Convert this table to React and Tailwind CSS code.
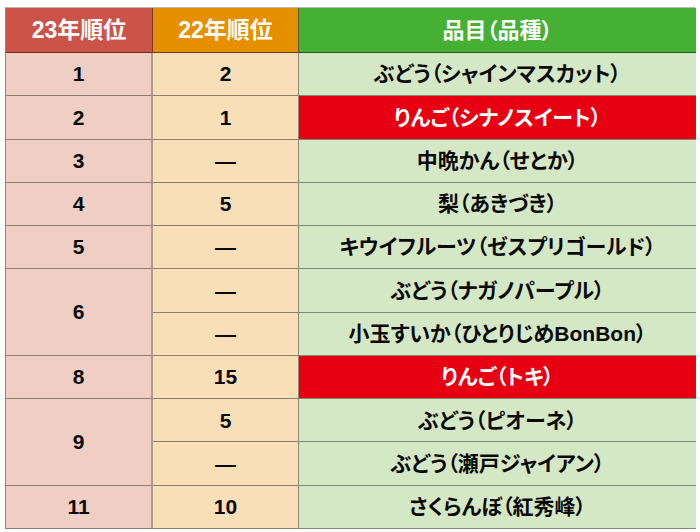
import React from "react";

const rows = [
  { a: "1", b: ["2"], c: [["ぶどう（シャインマスカット）", false]] },
  { a: "2", b: ["1"], c: [["りんご（シナノスイート）", true]] },
  { a: "3", b: ["—"], c: [["中晩かん（せとか）", false]] },
  { a: "4", b: ["5"], c: [["梨（あきづき）", false]] },
  { a: "5", b: ["—"], c: [["キウイフルーツ（ゼスプリゴールド）", false]] },
  { a: "6", b: ["—", "—"], c: [["ぶどう（ナガノパープル）", false], ["小玉すいか（ひとりじめBonBon）", false]] },
  { a: "8", b: ["15"], c: [["りんご（トキ）", true]] },
  { a: "9", b: ["5", "—"], c: [["ぶどう（ピオーネ）", false], ["ぶどう（瀬戸ジャイアン）", false]] },
  { a: "11", b: ["10"], c: [["さくらんぼ（紅秀峰）", false]] },
];

const font = { fontFamily: '"Liberation Sans", "Noto Sans CJK JP", sans-serif' };

export default function App() {
  const cells = [];
  rows.forEach((r, i) => {
    const span = r.b.length;
    cells.push(
      <div
        key={`a${i}`}
        className={`flex items-center justify-center bg-[#efcfc3] border-r-2 border-r-[#ae9b8f] border-b border-b-[#8d7b72] ${span === 2 ? "row-span-2" : ""}`}
      >
        {r.a}
      </div>
    );
    for (let k = 0; k < span; k++) {
      cells.push(
        <div
          key={`b${i}-${k}`}
          className="flex items-center justify-center bg-[#f8dfb8] border-r border-r-[#8f8a76] border-b border-b-[#8d7f6c]"
        >
          {r.b[k]}
        </div>
      );
      const [txt, red] = r.c[k];
      cells.push(
        <div
          key={`c${i}-${k}`}
          className={`flex items-center justify-center border-b border-b-[#7e8a78] [font-feature-settings:'palt'] ${red ? "bg-[#e60012] text-white" : "bg-[#d5e8c5]"}`}
        >
          {txt}
        </div>
      );
    }
  });

  return (
    <div className="w-[700px] h-[532px] bg-white pt-[7px] pl-[5px]" style={font}>
      <div className="w-[690px] grid grid-cols-[147px_146px_397px] grid-rows-[45px_repeat(11,43.27px)] border-t border-t-[#b8b8b8] border-l border-l-[#8a8a8a] border-r border-r-[#8a8a8a] font-bold text-[21px] text-[#0a0a0a]">
        <div className="flex items-center justify-center bg-[#cc5348] text-white text-[23px] border-r border-r-[#7a3a2a] border-b border-b-[#6a2a20]">
          23年順位
        </div>
        <div className="flex items-center justify-center bg-[#e68f00] text-white text-[23px] border-r border-r-[#5a5a3a] border-b border-b-[#6a4010]">
          22年順位
        </div>
        <div className="flex items-center justify-center bg-[#46b035] text-white text-[22px] border-b border-b-[#1f5a18] [font-feature-settings:'palt']">
          品目（品種）
        </div>
        {cells}
      </div>
    </div>
  );
}
